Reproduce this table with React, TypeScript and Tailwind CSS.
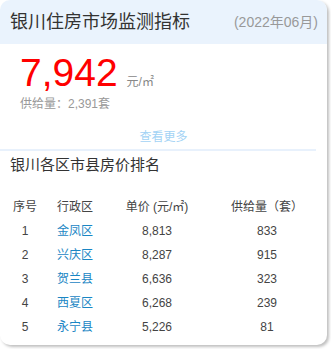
const rows = [
  { no: 1, name: "金凤区", price: "8,813", supply: "833" },
  { no: 2, name: "兴庆区", price: "8,287", supply: "915" },
  { no: 3, name: "贺兰县", price: "6,636", supply: "323" },
  { no: 4, name: "西夏区", price: "6,268", supply: "239" },
  { no: 5, name: "永宁县", price: "5,226", supply: "81" },
];

function App() {
  return (
    <div className="w-[331px] h-[349px] bg-white font-['Liberation_Sans','Noto_Sans_CJK_SC',sans-serif]">
      <div className="w-[327px] h-[345px] bg-white rounded-[10px] overflow-hidden shadow-[2px_2px_3px_rgba(0,0,0,0.25)]">
        <div className="h-[44px] bg-[#eaf3fd] flex items-center justify-between pl-[10px] pr-[9px]">
          <span className="text-[18px] text-[#333]">银川住房市场监测指标</span>
          <span className="text-[14px] text-[#999]">(2022年06月)</span>
        </div>

        <div className="pl-[20px] pt-[10px]">
          <div className="flex items-baseline h-[38px]">
            <span className="text-[39px] leading-[38px] text-[#ff0000]">7,942</span>
            <span className="text-[12px] text-[#888] ml-[9px]">元/㎡</span>
          </div>
          <div className="text-[12px] text-[#999] leading-[16px] mt-[4px]">供给量：2,391套</div>
        </div>

        <div className="text-center text-[12px] text-[#a3d3f5] mt-[17px] leading-[16px]">查看更多</div>
        <div className="h-[2px] bg-[#e8f1fc] w-[316px] mt-[4px]" />

        <div className="pl-[10px] text-[15px] text-[#333] leading-[20px] mt-[4px]">银川各区市县房价排名</div>

        <table className="mt-[20px] w-[320px] text-[12px] text-[#444] table-fixed">
          <colgroup>
            <col className="w-[50px]" />
            <col className="w-[50px]" />
            <col className="w-[114px]" />
            <col className="w-[106px]" />
          </colgroup>
          <thead>
            <tr className="h-[24px]">
              <th className="font-normal text-center">序号</th>
              <th className="font-normal text-center">行政区</th>
              <th className="font-normal text-center">单价 (元/㎡)</th>
              <th className="font-normal text-center">供给量（套）</th>
            </tr>
          </thead>
          <tbody>
            {rows.map((r) => (
              <tr key={r.no} className="h-[24px]">
                <td className="text-center">{r.no}</td>
                <td className="text-center text-[#1a86c4]">{r.name}</td>
                <td className="text-center">{r.price}</td>
                <td className="text-center">{r.supply}</td>
              </tr>
            ))}
          </tbody>
        </table>
      </div>
    </div>
  );
}

export default App;
